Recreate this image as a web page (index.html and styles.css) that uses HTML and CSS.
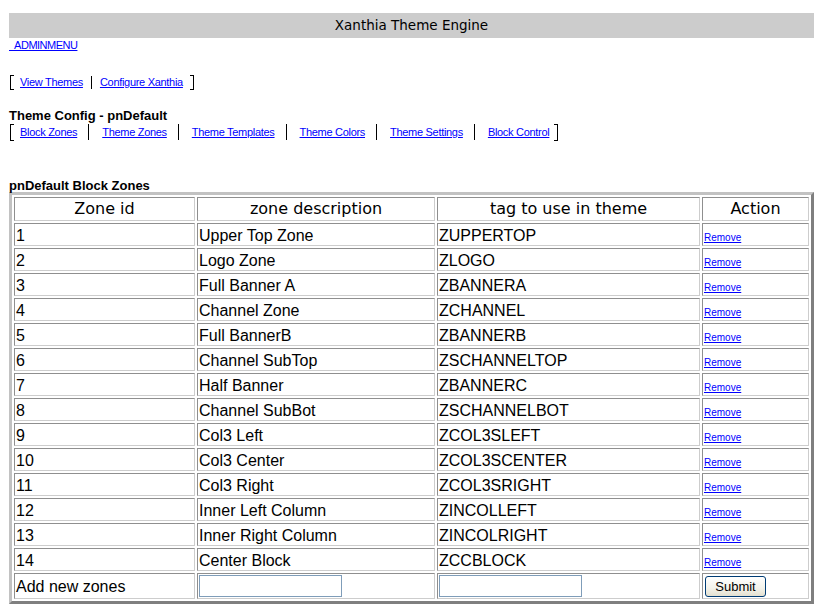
FILE: index.html
```html
<!DOCTYPE html>
<html>
<head>
<meta charset="utf-8">
<title>Xanthia Theme Engine</title>
<link rel="stylesheet" href="styles.css">
</head>
<body>
<div class="page">
  <div class="titlebar">Xanthia Theme Engine</div>
  <div class="admin"><a href="#">&nbsp;&nbsp;ADMINMENU</a></div>
  <div class="nav nav-main">
    <span class="br br-l"></span>
    <a href="#">View Themes</a>
    <span class="sep"></span>
    <a href="#">Configure Xanthia</a>
    <span class="br br-r"></span>
  </div>
  <div class="heading heading-config">Theme Config - pnDefault</div>
  <div class="nav nav-sub">
    <span class="br br-l"></span>
    <a href="#">Block Zones</a>
    <span class="sep"></span>
    <a href="#">Theme Zones</a>
    <span class="sep"></span>
    <a href="#">Theme Templates</a>
    <span class="sep"></span>
    <a href="#">Theme Colors</a>
    <span class="sep"></span>
    <a href="#">Theme Settings</a>
    <span class="sep"></span>
    <a href="#">Block Control</a>
    <span class="br br-r"></span>
  </div>
  <div class="heading heading-zones">pnDefault Block Zones</div>
  <table class="zones">
    <thead>
      <tr>
        <th class="col-id">Zone id</th>
        <th class="col-desc">zone description</th>
        <th class="col-tag">tag to use in theme</th>
        <th class="col-act">Action</th>
      </tr>
    </thead>
    <tbody>
      <tr><td>1</td><td>Upper Top Zone</td><td>ZUPPERTOP</td><td><a href="#">Remove</a></td></tr>
      <tr><td>2</td><td>Logo Zone</td><td>ZLOGO</td><td><a href="#">Remove</a></td></tr>
      <tr><td>3</td><td>Full Banner A</td><td>ZBANNERA</td><td><a href="#">Remove</a></td></tr>
      <tr><td>4</td><td>Channel Zone</td><td>ZCHANNEL</td><td><a href="#">Remove</a></td></tr>
      <tr><td>5</td><td>Full BannerB</td><td>ZBANNERB</td><td><a href="#">Remove</a></td></tr>
      <tr><td>6</td><td>Channel SubTop</td><td>ZSCHANNELTOP</td><td><a href="#">Remove</a></td></tr>
      <tr><td>7</td><td>Half Banner</td><td>ZBANNERC</td><td><a href="#">Remove</a></td></tr>
      <tr><td>8</td><td>Channel SubBot</td><td>ZSCHANNELBOT</td><td><a href="#">Remove</a></td></tr>
      <tr><td>9</td><td>Col3 Left</td><td>ZCOL3SLEFT</td><td><a href="#">Remove</a></td></tr>
      <tr><td>10</td><td>Col3 Center</td><td>ZCOL3SCENTER</td><td><a href="#">Remove</a></td></tr>
      <tr><td>11</td><td>Col3 Right</td><td>ZCOL3SRIGHT</td><td><a href="#">Remove</a></td></tr>
      <tr><td>12</td><td>Inner Left Column</td><td>ZINCOLLEFT</td><td><a href="#">Remove</a></td></tr>
      <tr><td>13</td><td>Inner Right Column</td><td>ZINCOLRIGHT</td><td><a href="#">Remove</a></td></tr>
      <tr><td>14</td><td>Center Block</td><td>ZCCBLOCK</td><td><a href="#">Remove</a></td></tr>
      <tr class="add-row">
        <td>Add new zones</td>
        <td><input class="zone-input" type="text"></td>
        <td><input class="zone-input" type="text"></td>
        <td><button class="submit" type="button">Submit</button></td>
      </tr>
    </tbody>
  </table>
</div>
</body>
</html>
```
FILE: styles.css
```css
html, body {
  margin: 0;
  padding: 0;
  background: #ffffff;
}

body {
  font-family: "Liberation Sans", Arial, sans-serif;
  color: #000000;
}

a {
  color: #0000ff;
  text-decoration: underline;
}

.page {
  width: 805px;
  padding: 13px 4px 0 9px;
}

.titlebar {
  height: 25px;
  background: #cccccc;
  font-family: "DejaVu Sans", Verdana, sans-serif;
  font-size: 13.5px;
  line-height: 25px;
  text-align: center;
}

.admin {
  height: 13px;
  font-size: 11px;
  line-height: 14px;
  letter-spacing: -0.5px;
}

.nav {
  display: flex;
  align-items: center;
  font-size: 11px;
  letter-spacing: -0.3px;
}

.nav-main {
  height: 18px;
  margin-top: 22px;
}

.nav-sub {
  height: 20px;
}

.br {
  box-sizing: border-box;
  width: 4px;
  border: 1px solid #000000;
}

.br-l {
  border-right: none;
  margin: 0 6px 0 1px;
}

.br-r {
  border-left: none;
}

.nav-main .br {
  height: 15px;
}

.nav-sub .br {
  height: 17px;
}

.nav-main .br-r {
  margin-left: 7px;
}

.nav-sub .br-r {
  margin-left: 5px;
}

.sep {
  width: 1px;
  background: #000000;
}

.nav-main .sep {
  height: 13px;
  margin: 0 8px;
}

.nav-sub .sep {
  height: 16px;
  margin: 0 13px 0 11px;
}

.heading {
  font-size: 13px;
  font-weight: bold;
}

.heading-config {
  height: 14px;
  line-height: 15px;
  margin-top: 17px;
}

.heading-zones {
  height: 13px;
  line-height: 14px;
  margin-top: 37px;
}

.zones {
  width: 805px;
  table-layout: fixed;
  border-collapse: separate;
  border-spacing: 2px;
  border: 3px solid;
  border-color: #c2c2c2 #7f7f7f #7f7f7f #c2c2c2;
}

.zones th,
.zones td {
  box-sizing: border-box;
  border: 1px solid;
  border-color: #8f8f8f #cdcdcd #cdcdcd #8f8f8f;
  padding: 2px 1px 0 1px;
  font-size: 16px;
  line-height: 19px;
  font-weight: normal;
  text-align: left;
  vertical-align: middle;
  white-space: nowrap;
  overflow: hidden;
}

.zones th {
  font-family: "DejaVu Sans", Verdana, sans-serif;
  text-align: center;
  line-height: 20px;
  padding: 1px;
}

.zones .add-row td {
  padding: 1px;
}

.col-id { width: 181px; }
.col-desc { width: 238px; }
.col-tag { width: 263px; }
.col-act { width: 107px; }

.zones td a {
  font-size: 10px;
  line-height: 10px;
}

.zone-input {
  display: block;
  box-sizing: border-box;
  width: 143px;
  height: 22px;
  margin: 0;
  padding: 0 2px;
  border: 1px solid #7f9db9;
  background: #ffffff;
  font-family: "Liberation Sans", Arial, sans-serif;
  font-size: 13px;
}

.submit {
  display: block;
  box-sizing: border-box;
  width: 61px;
  height: 21px;
  margin: 0 0 0 1px;
  padding: 0;
  border: 1px solid #003c74;
  border-radius: 3px;
  background: linear-gradient(#ffffff, #f3f2ea 60%, #e3e0d0);
  font-family: "Liberation Sans", Arial, sans-serif;
  font-size: 13px;
  color: #000000;
}
```
